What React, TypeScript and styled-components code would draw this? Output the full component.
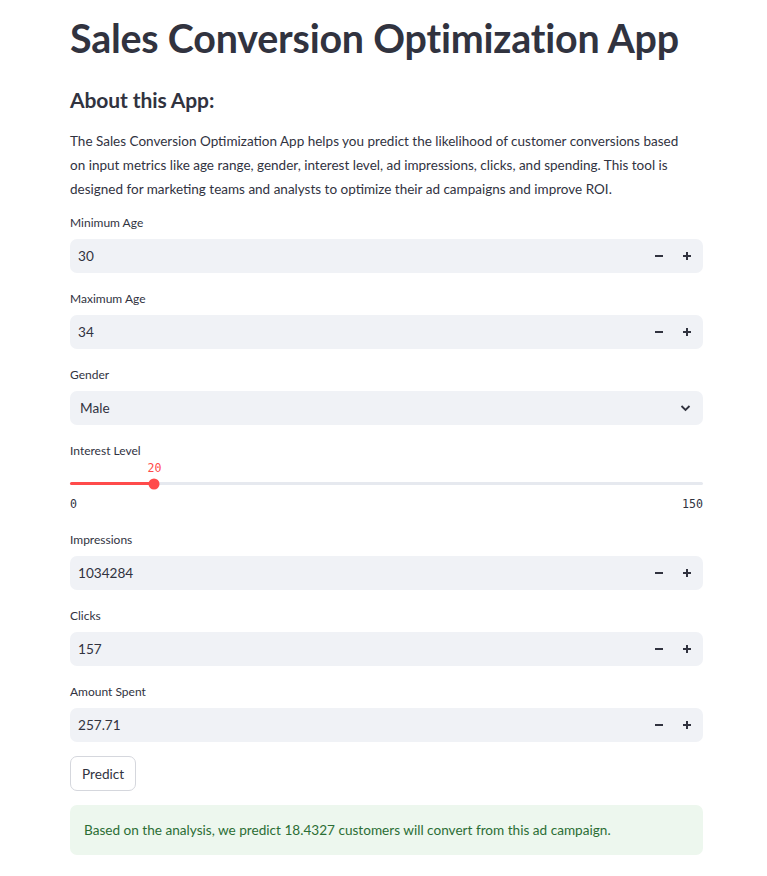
import { FC } from 'react';
import styled, { createGlobalStyle } from 'styled-components';

const Color = {
  text: '#31333f',
  field: '#f0f2f6',
  red: '#ff4b4b',
  track: '#e6e9ef',
  successBg: '#edf7ee',
  successText: '#2b6e35',
  border: '#d5d7dd',
};

const Global = createGlobalStyle`
  body {
    margin: 0;
    background: #fff;
    color: ${Color.text};
    font-family: Lato, "Noto Sans", sans-serif;
  }
`;

const Page = styled.main`
  width: 633px;
  margin-left: 70px;
  padding-top: 13px;
  padding-bottom: 20px;
  display: flex;
  flex-direction: column;
`;

const Title = styled.h1`
  margin: 0;
  font-size: 39.4px;
  font-weight: 700;
  line-height: 50px;
  letter-spacing: -0.2px;
`;

const Subtitle = styled.h3`
  margin: 21px 0 0;
  font-size: 21px;
  font-weight: 700;
  line-height: 32px;
  letter-spacing: -0.1px;
`;

const Paragraph = styled.p`
  margin: 13px 0 0;
  font-size: 13.5px;
  line-height: 24px;
`;

const Field = styled.div<{ gap?: number }>`
  margin-top: ${(p) => p.gap ?? 16}px;
  display: flex;
  flex-direction: column;
`;

const Label = styled.label<{ tight?: boolean }>`
  font-size: 12px;
  line-height: 20px;
  height: 20px;
  margin-bottom: ${(p) => (p.tight ? 0 : 6)}px;
`;

const InputBox = styled.div`
  height: 34px;
  border-radius: 7px;
  background: ${Color.field};
  display: flex;
  align-items: center;
  padding: 0 2px 0 8px;
  font-size: 13.6px;
`;

const Value = styled.span`
  flex: 1;
`;

const StepButton = styled.span`
  width: 28px;
  height: 34px;
  display: flex;
  align-items: center;
  justify-content: center;
  color: ${Color.text};
`;

const SelectBox = styled(InputBox)`
  padding: 0 12px 0 10px;
`;

const SliderWrap = styled.div`
  display: flex;
  flex-direction: column;
`;

const Mono = styled.span<{ red?: boolean }>`
  font-family: "DejaVu Sans Mono", "Liberation Mono", monospace;
  font-size: 11.6px;
  line-height: 16px;
  color: ${(p) => (p.red ? Color.red : Color.text)};
`;

const ThumbLabelRow = styled.div`
  height: 15px;
  position: relative;
`;

const TrackRow = styled.div`
  height: 15px;
  display: flex;
  align-items: center;
`;

const Track = styled.div`
  flex: 1;
  height: 3.6px;
  border-radius: 2px;
  background: ${Color.track};
  position: relative;
`;

const Fill = styled.div`
  position: absolute;
  left: 0;
  top: 0;
  bottom: 0;
  border-radius: 2px;
  background: ${Color.red};
`;

const Thumb = styled.div`
  position: absolute;
  top: 50%;
  width: 11px;
  height: 11px;
  border-radius: 50%;
  background: ${Color.red};
  transform: translate(-50%, -50%);
`;

const FloatingValue = styled(Mono)`
  position: absolute;
  bottom: 0;
  transform: translateX(-50%);
`;

const Ticks = styled.div`
  display: flex;
  justify-content: space-between;
  margin-top: 5px;
`;

const Button = styled.button`
  align-self: flex-start;
  margin-top: 14px;
  height: 35px;
  padding: 0 11px;
  border: 1px solid ${Color.border};
  border-radius: 7px;
  background: #fff;
  color: ${Color.text};
  font-family: inherit;
  font-size: 13.6px;
`;

const Alert = styled.div`
  margin-top: 14px;
  padding: 0 14px;
  height: 50px;
  display: flex;
  align-items: center;
  border-radius: 7px;
  background: ${Color.successBg};
  color: ${Color.successText};
  font-size: 13.6px;
`;

const Minus = () => (
  <svg width="10" height="10" viewBox="0 0 10 10">
    <path d="M1 5h8" stroke="currentColor" strokeWidth="2" />
  </svg>
);

const Plus = () => (
  <svg width="10" height="10" viewBox="0 0 10 10">
    <path d="M1 5h8M5 1v8" stroke="currentColor" strokeWidth="2" />
  </svg>
);

const Chevron = () => (
  <svg width="11" height="8" viewBox="0 0 11 8">
    <path d="M1.5 2l4 4 4-4" fill="none" stroke="currentColor" strokeWidth="1.8" />
  </svg>
);

const NumberInput: FC<{ label: string; value: string; gap?: number }> = ({ label, value, gap }) => (
  <Field gap={gap}>
    <Label>{label}</Label>
    <InputBox>
      <Value>{value}</Value>
      <StepButton>
        <Minus />
      </StepButton>
      <StepButton>
        <Plus />
      </StepButton>
    </InputBox>
  </Field>
);

const Slider: FC<{ label: string; value: number; min: number; max: number }> = ({ label, value, min, max }) => {
  const pct = ((value - min) / (max - min)) * 100;
  return (
    <Field>
      <Label tight>{label}</Label>
      <SliderWrap>
        <ThumbLabelRow>
          <FloatingValue red style={{ left: `${pct}%` }}>
            {value}
          </FloatingValue>
        </ThumbLabelRow>
        <TrackRow>
          <Track>
            <Fill style={{ width: `${pct}%` }} />
            <Thumb style={{ left: `${pct}%` }} />
          </Track>
        </TrackRow>
        <Ticks>
          <Mono>{min}</Mono>
          <Mono>{max}</Mono>
        </Ticks>
      </SliderWrap>
    </Field>
  );
};

export default function App() {
  return (
    <>
      <Global />
      <Page>
        <Title>Sales Conversion Optimization App</Title>
        <Subtitle>About this App:</Subtitle>
        <Paragraph>
          The Sales Conversion Optimization App helps you predict the likelihood of customer conversions based
          <br />
          on input metrics like age range, gender, interest level, ad impressions, clicks, and spending. This tool is
          <br />
          designed for marketing teams and analysts to optimize their ad campaigns and improve ROI.
        </Paragraph>
        <NumberInput label="Minimum Age" value="30" gap={12} />
        <NumberInput label="Maximum Age" value="34" />
        <Field>
          <Label>Gender</Label>
          <SelectBox>
            <Value>Male</Value>
            <Chevron />
          </SelectBox>
        </Field>
        <Slider label="Interest Level" value={20} min={0} max={150} />
        <NumberInput label="Impressions" value="1034284" gap={18} />
        <NumberInput label="Clicks" value="157" />
        <NumberInput label="Amount Spent" value="257.71" />
        <Button>Predict</Button>
        <Alert>Based on the analysis, we predict 18.4327 customers will convert from this ad campaign.</Alert>
      </Page>
    </>
  );
}
